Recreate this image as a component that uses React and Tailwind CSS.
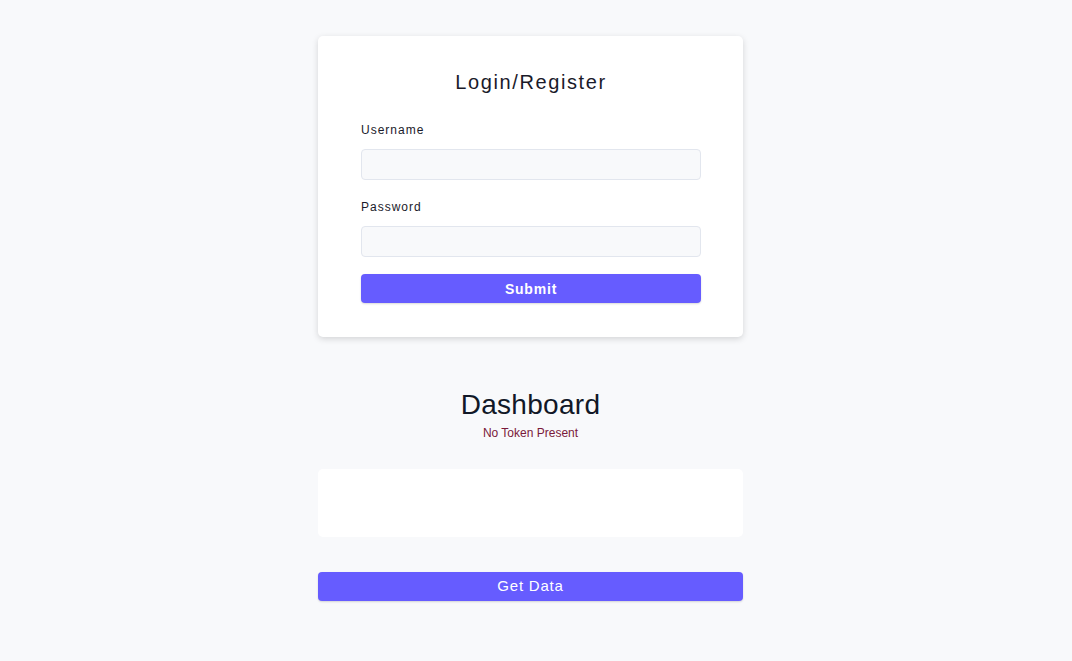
export default function App() {
  const font = { fontFamily: '"Liberation Sans", Arial, sans-serif' };
  return (
    <div className="min-h-[661px] bg-[#f8f9fb] flex justify-center pr-[11px]" style={font}>
      <div className="w-[425px] pt-[36px] flex flex-col">
        <div className="bg-white rounded-[5px] shadow-[0_2px_6px_rgba(0,0,0,0.15)] pl-[43px] pr-[42px] pt-[34px] pb-[34px] flex flex-col">
          <h1 className="text-center text-[20px] leading-[24px] tracking-[1.6px] text-[#1a1a2a]">Login/Register</h1>
          <label className="mt-[28px] text-[12px] leading-[16px] tracking-[1px] text-[#1a1a2a]">Username</label>
          <input className="mt-[11px] h-[31px] w-full rounded-[4px] border border-[#e2e6ee] bg-[#f8f9fb] outline-none" />
          <label className="mt-[19px] text-[12px] leading-[16px] tracking-[1px] text-[#1a1a2a]">Password</label>
          <input type="password" className="mt-[11px] h-[31px] w-full rounded-[4px] border border-[#e2e6ee] bg-[#f8f9fb] outline-none" />
          <button className="mt-[17px] h-[29px] w-full rounded-[4px] bg-[#665cff] text-white text-[14px] font-semibold tracking-[0.8px] leading-[30px] shadow-[0_1px_2px_rgba(0,0,0,0.15)]">Submit</button>
        </div>
        <h2 className="mt-[52px] text-center text-[28px] leading-[32px] tracking-[0.3px] text-[#111827]">Dashboard</h2>
        <p className="mt-[5px] text-center text-[12px] leading-[14px] text-[#7a1a3a]">No Token Present</p>
        <div className="mt-[29px] h-[68px] bg-white rounded-[5px]"></div>
        <button className="mt-[35px] h-[29px] w-full rounded-[4px] bg-[#665cff] text-white text-[15px] tracking-[0.8px] shadow-[0_1px_2px_rgba(0,0,0,0.15)]">Get Data</button>
      </div>
    </div>
  );
}
